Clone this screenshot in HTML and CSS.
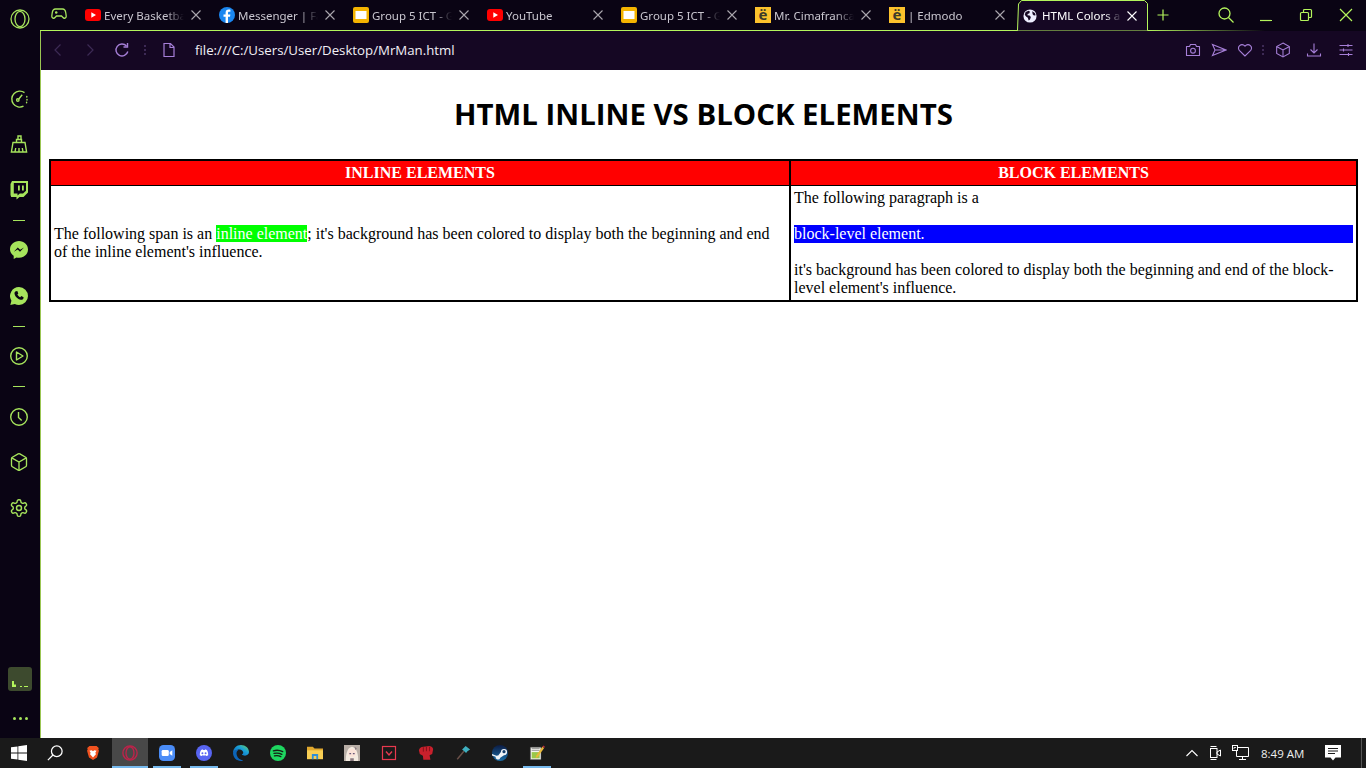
FILE: index.html
```html
<!DOCTYPE html>
<html lang="en">
<head>
<meta charset="utf-8">
<title>MrMan</title>
<link rel="stylesheet" href="styles.css">
</head>
<body>
<div class="screen">
  <div class="desktop">
    <aside class="sidebar">
      <div class="logo-slot">
        <svg class="i20" viewBox="0 0 20 20" fill="none" stroke="currentColor" stroke-width="1.3"><circle cx="10" cy="10" r="9"/><ellipse cx="10" cy="10" rx="5" ry="7.6"/></svg>
      </div>
      <div class="side-slot">
        <svg class="i20" viewBox="0 0 20 20" fill="none" stroke="currentColor" stroke-width="1.4"><path d="M14.5 17.2A8 8 0 1 1 15.5 3.6"/><circle cx="8.8" cy="11" r="1.2"/><path d="M9.8 10l3.4-4.2"/><path d="M17.8 7.5v.6M18 10.4v.6M17.6 13.2v.6" stroke-linecap="round"/></svg>
      </div>
      <div class="side-slot">
        <svg class="i20" viewBox="0 0 20 20" fill="none" stroke="currentColor" stroke-width="1.4"><path d="M4 8.5h12l1.6 9.5H2.4z"/><path d="M7.5 8.5V5.5h5v3M9 5.5V2h3v3.5M6 18l.7-4M10 18v-4M14 18l-.7-4"/></svg>
      </div>
      <div class="side-slot">
        <svg class="i20" viewBox="0 0 20 20"><path fill="currentColor" d="M3 1h16v11.5L14.500 17H10.500L7.500 19.500V17H2.200L1.500 15V4zM4.800 3v10.500H8.500v2l2.300-2H14l3-2.800V3z"/><path fill="currentColor" d="M9 5.500h1.800v5H9zM13 5.500h1.800v5H13z"/></svg>
      </div>
      <div class="side-sep"></div>
      <div class="side-slot">
        <svg class="i20" viewBox="0 0 20 20"><path fill="currentColor" d="M10 1c5 0 9 3.700 9 8.400s-4 8.400-9 8.400c-.9 0-1.700-.1-2.500-.3L4.700 19v-3.200C2.500 14.200 1 12 1 9.400 1 4.700 5 1 10 1z"/><path fill="#0a0414" d="M4.800 11.800l4-4.300 2.300 2.200 3.900-2.200-4 4.300-2.300-2.200z"/></svg>
      </div>
      <div class="side-slot">
        <svg class="i20" viewBox="0 0 20 20"><path fill="currentColor" d="M10 1a9 9 0 0 1 0 18c-1.500 0-3-.4-4.200-1L1.300 19l1.100-4.300A9 9 0 0 1 10 1z"/><path fill="#0a0414" d="M7 5.200l1.300-.1 1 2.300-.9 1.200c.5 1.200 1.500 2.100 2.800 2.700l1.100-1.200 2.300 1.100-.2 1.300c-.4 1-1.500 1.500-2.600 1.300-3.200-.6-5.800-3.200-6.300-6.300C5.300 6.500 6 5.500 7 5.200z"/></svg>
      </div>
      <div class="side-sep"></div>
      <div class="side-slot">
        <svg class="i20" viewBox="0 0 20 20" fill="none" stroke="currentColor" stroke-width="1.4"><circle cx="10" cy="10" r="8.300"/><path d="M7.500 6l6.500 4-6.500 4z" stroke-linejoin="round"/></svg>
      </div>
      <div class="side-sep"></div>
      <div class="side-slot">
        <svg class="i20" viewBox="0 0 20 20" fill="none" stroke="currentColor" stroke-width="1.4"><circle cx="10" cy="10" r="8.300"/><path d="M9.500 5v5.500l3.200 3"/></svg>
      </div>
      <div class="side-slot">
        <svg class="i20" viewBox="0 0 24 24" fill="none" stroke="currentColor" stroke-width="1.600"><path d="M21 8a2 2 0 0 0-1-1.730l-7-4a2 2 0 0 0-2 0l-7 4A2 2 0 0 0 3 8v8a2 2 0 0 0 1 1.730l7 4a2 2 0 0 0 2 0l7-4A2 2 0 0 0 21 16Z"/><path d="m3.300 7 8.700 5 8.700-5M12 22V12"/></svg>
      </div>
      <div class="side-slot">
        <svg class="i20" viewBox="0 0 24 24" fill="none" stroke="currentColor" stroke-width="1.700"><path d="M12.220 2h-.44a2 2 0 0 0-2 2v.18a2 2 0 0 1-1 1.730l-.43.25a2 2 0 0 1-2 0l-.15-.08a2 2 0 0 0-2.730.73l-.22.38a2 2 0 0 0 .73 2.730l.15.1a2 2 0 0 1 1 1.720v.51a2 2 0 0 1-1 1.740l-.15.09a2 2 0 0 0-.73 2.730l.22.38a2 2 0 0 0 2.730.73l.15-.08a2 2 0 0 1 2 0l.43.25a2 2 0 0 1 1 1.730V20a2 2 0 0 0 2 2h.44a2 2 0 0 0 2-2v-.18a2 2 0 0 1 1-1.730l.43-.25a2 2 0 0 1 2 0l.15.08a2 2 0 0 0 2.730-.73l.22-.39a2 2 0 0 0-.73-2.730l-.15-.08a2 2 0 0 1-1-1.740v-.5a2 2 0 0 1 1-1.740l.15-.09a2 2 0 0 0 .73-2.730l-.22-.38a2 2 0 0 0-2.730-.73l-.15.08a2 2 0 0 1-2 0l-.43-.25a2 2 0 0 1-1-1.730V4a2 2 0 0 0-2-2z"/><circle cx="12" cy="12" r="3"/></svg>
      </div>
      <div class="side-bottom">
        <div class="widget">
          <svg viewBox="0 0 24 24" class="widget-svg"><path fill="currentColor" d="M4 14h2v3.500h2V20H4zM12 19h2v1h-2zM16 19h4v1h-4z"/></svg>
        </div>
        <div class="dots"><i></i><i></i><i></i></div>
      </div>
    </aside>

    <div class="browser">
      <div class="tabstrip">
        <div class="game-slot">
          <svg class="i16" viewBox="0 0 16 16" fill="none" stroke="currentColor" stroke-width="1.300"><path d="M4.500 3h7c2 0 3 1.500 3.300 4l.4 3c.2 2-2 3-3.200 1.500L10.500 10h-5L4 11.500C2.800 13 .6 12 .8 10l.4-3C1.500 4.500 2.500 3 4.500 3z"/><path d="M4 6.500h2.500M5.200 5.300v2.400M10.500 6.500h.1M12 6.500h.1"/></svg>
        </div>

        <div class="tab">
          <svg class="fav" viewBox="0 0 16 16"><rect y="2" width="16" height="12" rx="3" fill="#f00"/><path d="M6.300 5.200v5.600L11 8z" fill="#fff"/></svg>
          <span class="tab-title">Every Basketball Play</span>
          <svg class="x" viewBox="0 0 10 10"><path d="M.5.500l9 9M9.500.500l-9 9"/></svg>
        </div>
        <div class="tab">
          <svg class="fav" viewBox="0 0 16 16"><circle cx="8" cy="8" r="8" fill="#1b87f0"/><path d="M9 16V9.800h2l.35-2.400H9V6c0-.8.300-1.200 1.200-1.200h1.200V2.700C11 2.600 10.400 2.500 9.700 2.500 7.800 2.500 6.600 3.600 6.600 5.700v1.700H4.500v2.400h2.100V16z" fill="#fff"/></svg>
          <span class="tab-title">Messenger | Facebook</span>
          <svg class="x" viewBox="0 0 10 10"><path d="M.5.500l9 9M9.500.500l-9 9"/></svg>
        </div>
        <div class="tab">
          <svg class="fav" viewBox="0 0 16 16"><rect width="16" height="16" rx="2" fill="#f4b400"/><rect x="2.500" y="4" width="11" height="8" fill="#fff"/></svg>
          <span class="tab-title">Group 5 ICT - Google Slides</span>
          <svg class="x" viewBox="0 0 10 10"><path d="M.5.500l9 9M9.500.500l-9 9"/></svg>
        </div>
        <div class="tab">
          <svg class="fav" viewBox="0 0 16 16"><rect y="2" width="16" height="12" rx="3" fill="#f00"/><path d="M6.300 5.200v5.600L11 8z" fill="#fff"/></svg>
          <span class="tab-title">YouTube</span>
          <svg class="x" viewBox="0 0 10 10"><path d="M.5.500l9 9M9.500.500l-9 9"/></svg>
        </div>
        <div class="tab">
          <svg class="fav" viewBox="0 0 16 16"><rect width="16" height="16" rx="2" fill="#f4b400"/><rect x="2.500" y="4" width="11" height="8" fill="#fff"/></svg>
          <span class="tab-title">Group 5 ICT - Google Slides</span>
          <svg class="x" viewBox="0 0 10 10"><path d="M.5.500l9 9M9.500.500l-9 9"/></svg>
        </div>
        <div class="tab">
          <span class="fav edmodo">ë</span>
          <span class="tab-title">Mr. Cimafranca | Edmodo</span>
          <svg class="x" viewBox="0 0 10 10"><path d="M.5.500l9 9M9.500.500l-9 9"/></svg>
        </div>
        <div class="tab">
          <span class="fav edmodo">ë</span>
          <span class="tab-title">| Edmodo</span>
          <svg class="x" viewBox="0 0 10 10"><path d="M.5.500l9 9M9.500.500l-9 9"/></svg>
        </div>
        <div class="tab tab-active">
          <svg class="tab-shape" viewBox="0 0 134 31"><path d="M0 30.500H3.500L4.500 4 7.500 .5H130.500L133.500 3.500V30.500" fill="#150723" stroke="#b4f55c"/></svg>
          <svg class="fav fav-globe" viewBox="0 0 16 16"><circle cx="8" cy="8" r="7.500" fill="#eef"/><path d="M3 3.500l3.500-1.500 1.500 1-1 2-1.500.5-.5 1.500 2.500.5 1.500 1.500-1 3-1.500 1-1-3-2-1.500-1.500-2zM10.500 2.500l3 2 1 2.500-2 .5-1.500-1.500z" fill="#150723"/></svg>
          <span class="tab-title">HTML Colors and Color</span>
          <svg class="x" viewBox="0 0 10 10"><path d="M.5.500l9 9M9.500.500l-9 9"/></svg>
        </div>
        <div class="plus-slot">
          <svg class="i12" viewBox="0 0 12 12" fill="none" stroke="currentColor" stroke-width="1.200"><path d="M6 .5v11M.5 6h11"/></svg>
        </div>
        <div class="winctl">
          <div class="ctl"><svg class="i16" viewBox="0 0 16 16" fill="none" stroke="currentColor" stroke-width="1.300"><circle cx="6.500" cy="6.500" r="5.500"/><path d="M10.500 10.500l5 5"/></svg></div>
          <div class="ctl"><svg class="i16" viewBox="0 0 16 16" fill="none" stroke="currentColor" stroke-width="1.200"><path d="M2 13.500h12"/></svg></div>
          <div class="ctl"><svg class="i16" viewBox="0 0 16 16" fill="none" stroke="currentColor" stroke-width="1.200"><rect x="2.500" y="5.500" width="8" height="8" rx="1"/><path d="M5.500 5.500V3.500a1 1 0 0 1 1-1h6a1 1 0 0 1 1 1v6a1 1 0 0 1-1 1h-2"/></svg></div>
          <div class="ctl"><svg class="i16" viewBox="0 0 16 16" fill="none" stroke="currentColor" stroke-width="1.200"><path d="M2 2l12 12M14 2L2 14"/></svg></div>
        </div>
      </div>

      <div class="content">
        <div class="addrbar">
          <div class="nav nav-dim"><svg class="i16" viewBox="0 0 16 16" fill="none" stroke="currentColor" stroke-width="1.200"><path d="M10.500 2.500L5 8l5.500 5.500"/></svg></div>
          <div class="nav nav-dim"><svg class="i16" viewBox="0 0 16 16" fill="none" stroke="currentColor" stroke-width="1.200"><path d="M5.500 2.500L11 8l-5.500 5.500"/></svg></div>
          <div class="nav"><svg class="i16" viewBox="0 0 16 16" fill="none" stroke="currentColor" stroke-width="1.400"><path d="M13.800 9.500A6 6 0 1 1 12.500 4"/><path d="M13.500 1v4h-4"/></svg></div>
          <div class="vdots vd-left"><i></i><i></i><i></i></div>
          <div class="file-slot"><svg class="i16" viewBox="0 0 16 16" fill="none" stroke="currentColor" stroke-width="1.200"><path d="M3 1.500h6.500L13 5v9.500H3zM9 1.500V5.500h4"/></svg></div>
          <div class="url">file:///C:/Users/User/Desktop/MrMan.html</div>
          <div class="tools">
            <div class="tool"><svg class="i16" viewBox="0 0 16 16" fill="none" stroke="currentColor" stroke-width="1.100"><path d="M1.500 4.500h3l1-2h5l1 2h3v9h-13z" stroke-linejoin="round"/><circle cx="8" cy="8.700" r="2.400"/></svg></div>
            <div class="tool"><svg class="i16" viewBox="0 0 16 16" fill="none" stroke="currentColor" stroke-width="1.100"><path d="M1.500 2.500L15 8 1.500 13.500 4 8zM4 8h11"/></svg></div>
            <div class="tool"><svg class="i16" viewBox="0 0 16 16" fill="none" stroke="currentColor" stroke-width="1.100"><path d="M8 14L2.300 8.300A3.500 3.500 0 0 1 7.200 3.400L8 4.200l.8-.8a3.500 3.500 0 0 1 4.900 4.900z"/></svg></div>
            <div class="vdots vd-right"><i></i><i></i><i></i></div>
            <div class="tool tool-31"><svg class="i16" viewBox="0 0 24 24" fill="none" stroke="currentColor" stroke-width="1.600"><path d="M12 1.500l9.500 5.300v10.400L12 22.500l-9.500-5.300V6.800z"/><path d="M2.800 7L12 12l9.200-5M12 22V12"/></svg></div>
            <div class="tool tool-32"><svg class="i16" viewBox="0 0 16 16" fill="none" stroke="currentColor" stroke-width="1.100"><path d="M8 1.500v9M4.500 7.500L8 11l3.500-3.500M1.500 11.500v2.500h13v-2.500"/></svg></div>
            <div class="tool tool-32"><svg class="i16" viewBox="0 0 16 16" fill="none" stroke="currentColor" stroke-width="1.100"><path d="M1.500 3.500h13M1.500 8h13M1.500 12.500h13M10 2v3M5.500 6.500v3M10.500 11v3"/></svg></div>
          </div>
        </div>

        <main class="page">
          <h1 class="title">HTML INLINE VS BLOCK ELEMENTS</h1>
          <table class="compare">
            <colgroup><col class="col-a"><col></colgroup>
            <thead>
              <tr><th>INLINE ELEMENTS</th><th>BLOCK ELEMENTS</th></tr>
            </thead>
            <tbody>
              <tr>
                <td>The following span is an <span class="mark-inline">inline element</span>; it's background has been colored to display both the beginning and end of the inline element's influence.</td>
                <td>The following paragraph is a
                  <p class="mark-block">block-level element.</p>
                  <p class="after">it's background has been colored to display both the beginning and end of the block-level element's influence.</p>
                </td>
              </tr>
            </tbody>
          </table>
        </main>
      </div>
    </div>
  </div>

  <footer class="taskbar">
    <div class="tb"><svg viewBox="0 0 16 16" fill="#fff"><path d="M0 2.300l6.500-.9v6.200H0zM7.300 1.300L16 0v7.600H7.300zM0 8.400h6.500v6.200L0 13.700zM7.300 8.400H16V16l-8.700-1.200z"/></svg></div>
    <div class="tb tb-search"><svg viewBox="0 0 18 18" fill="none" stroke="#fff" stroke-width="1.400"><circle cx="11" cy="7" r="6"/><path d="M6.700 11.300L1 17"/></svg></div>
    <div class="tb"><svg viewBox="0 0 18 18"><path fill="#f1521f" d="M5 1h8l2.500 2.500-.5 1.500.7 1.500L13.500 14 9 17 4.500 14 2.300 6.500 3 5l-.5-1.500z"/><path fill="#fff" d="M5 6.500l2.500-.5L9 7l1.500-1 2.500.5-1.500 2.500 1 1L10 13 9 14l-1-1-2.500-3 1-1z"/></svg></div>
    <div class="tb tb-active"><svg viewBox="0 0 18 18" fill="none" stroke="#c0224a" stroke-width="1.500"><circle cx="9" cy="9" r="8"/><ellipse cx="9" cy="9" rx="4.500" ry="7"/></svg></div>
    <div class="tb tb-open"><svg viewBox="0 0 18 18"><rect width="18" height="18" rx="5" fill="#4a8cf7"/><rect x="3" y="5.500" width="8" height="7" rx="1.500" fill="#fff"/><path d="M12 8l3-2v6l-3-2z" fill="#fff"/></svg></div>
    <div class="tb tb-open"><svg viewBox="0 0 18 18"><circle cx="9" cy="9" r="9" fill="#5865f2"/><path fill="#fff" d="M5.800 5.500c1-.4 1.500-.5 2-.5l.3.6h1.800l.3-.6c.5 0 1 .1 2 .5 1 1.500 1.600 3.500 1.500 6-.8.6-1.500.9-2.300 1l-.6-.9-.9.300H8.100l-.9-.3-.6.9c-.8-.1-1.500-.4-2.300-1-.1-2.500.5-4.500 1.500-6z"/><circle cx="7.200" cy="9.300" r="1.100" fill="#5865f2"/><circle cx="10.800" cy="9.300" r="1.100" fill="#5865f2"/></svg></div>
    <div class="tb"><svg viewBox="0 0 18 18"><defs><linearGradient id="eg" x1="0" y1="1" x2="1" y2="0"><stop offset="0" stop-color="#0a58b0"/><stop offset=".6" stop-color="#1aa0d8"/><stop offset="1" stop-color="#6fd85a"/></linearGradient></defs><path fill="url(#eg)" d="M9 0c5 0 9 3.500 9 8 0 2.500-2 4-4.500 4-1.500 0-3-.5-3.500-1.300.8-.4 1.500-1.200 1.500-2.200C11.500 6.500 9.500 5 7.500 5 3.500 5 0 8 0 9 0 4 4 0 9 0z"/><path fill="#0c64b8" d="M0 9c0-2.500 3-4 6-3.500C4 6.500 3.500 9 4.300 11.500c.8 3 3.700 5.500 7.200 5.800C10.500 17.800 9.800 18 9 18c-5 0-9-4-9-9z"/></svg></div>
    <div class="tb"><svg viewBox="0 0 18 18"><circle cx="9" cy="9" r="9" fill="#1ed760"/><path d="M3.800 6.500c3.500-1 7.300-.7 10.500 1M4.500 9.500c3-.8 6-.5 8.800 1M5 12.300c2.500-.6 5-.4 7.200.8" fill="none" stroke="#152015" stroke-width="1.500" stroke-linecap="round"/></svg></div>
    <div class="tb"><svg viewBox="0 0 18 18"><path fill="#e0a82e" d="M0 2h6.500l2 2H18v11H0z"/><path fill="#f8cf54" d="M0 6h18v10H0z"/><path fill="#2f8fd8" d="M5.500 10h7v6h-2v-3.500h-3V16h-2z"/></svg></div>
    <div class="tb"><svg viewBox="0 0 18 18"><rect width="18" height="18" fill="#b8aea6"/><path fill="#f4ebe0" d="M2 18C2 12 3 3 9 2c6 1 7 10 7 16z"/><circle cx="9" cy="9" r="4.500" fill="#fbe3d8"/><path fill="#6a5a78" d="M6 9h2v1.500H6zM10 9h2v1.500h-2z"/><path fill="#8a7a80" d="M12 2l2.500 2-2 1.500zM7 15h4v3H7z"/></svg></div>
    <div class="tb"><svg viewBox="0 0 16 16" fill="none" stroke="#e8394e" stroke-width="1.200"><rect x="1.500" y="1.500" width="13" height="13"/><path d="M5 6.500l3 3.500 3-3.500" stroke-width="1.400"/></svg></div>
    <div class="tb"><svg viewBox="0 0 18 18"><path fill="#c8202c" d="M1 6Q2 2 6 2L13 1Q17 2 17 5L16 10 13 11.500 13.500 14 14 16.500 6 16.500 5.500 12 2 10z"/><path stroke="#7c1018" fill="none" d="M6 2.500v5M9.500 2v5M13 2v5"/></svg></div>
    <div class="tb"><svg viewBox="0 0 18 18"><path fill="#3fb0c0" d="M8 5l4-4 5 4-3 2-1.500 2z"/><path stroke="#6a5048" stroke-width="1.600" d="M10 7L2.500 16"/></svg></div>
    <div class="tb"><svg viewBox="0 0 18 18"><defs><linearGradient id="sg" x1="0" y1="0" x2="0" y2="1"><stop offset="0" stop-color="#0c1c44"/><stop offset="1" stop-color="#1a6ea8"/></linearGradient></defs><circle cx="9" cy="9" r="9" fill="url(#sg)"/><path fill="#f0f4f8" d="M0 10l5 2.200a3 3 0 0 1 2-.3L10 8a3.500 3.500 0 1 1 3.500 3.500L9.300 14.300A2.700 2.700 0 0 1 4 13.300l-4-1.500z"/><circle cx="13.500" cy="7.500" r="1.800" fill="#16406e"/></svg></div>
    <div class="tb tb-open"><svg viewBox="0 0 18 18"><path fill="#f4f4f0" stroke="#444" stroke-width=".6" d="M1.500 2.500h12v14h-12z"/><rect x="3" y="8" width="9" height="7" fill="#9ac84a"/><path d="M3 4h9M3 6h9" stroke="#777" stroke-width=".8"/><path d="M8 12l7-10 2 1.500-7 10-2.500 1z" fill="#e8b83a"/><path d="M15 2l1-1.500 2 1.500-1 1.500z" fill="#b8303a"/></svg></div>

    <div class="tray">
      <div class="tray-i"><svg class="i12" viewBox="0 0 12 12" fill="none" stroke="#fff" stroke-width="1.100"><path d="M.5 9L6 3.500 11.500 9"/></svg></div>
      <div class="tray-i"><svg class="i16" viewBox="0 0 16 16" fill="none" stroke="#fff" stroke-width="1"><rect x="2.500" y="3.500" width="6.500" height="9"/><path d="M9 7l3.500-2v6L9 9zM2.500 1.500h6M2.500 14.500h6"/></svg></div>
      <div class="tray-i"><svg class="i18" viewBox="0 0 18 18" fill="none" stroke="#fff" stroke-width="1"><path d="M5.500 3.500h12v9h-12zM11.500 12.500v3M8 15.500h7"/><rect x="1.500" y="1.500" width="5" height="5" fill="#1a1a1a"/><path d="M3 5V3.500h2" stroke-width=".8"/></svg></div>
      <div class="clock">8:49 AM</div>
      <div class="notif"><svg class="i18" viewBox="0 0 18 18"><path fill="#fff" d="M1 1h16v12.500h-5.500L9 16.500 6.500 13.500H1z"/><path stroke="#1a1a1a" d="M4 4.500h10M4 7h10M4 9.500h7"/></svg></div>
      <div class="show-desktop"></div>
    </div>
  </footer>
</div>
</body>
</html>
```

FILE: styles.css
```css
* { box-sizing: border-box; }
html, body { margin: 0; padding: 0; height: 100%; overflow: hidden; }
body { font-family: "Noto Sans", sans-serif; background: #fff; }
svg { display: block; flex: none; }

.i12 { width: 12px; height: 12px; }
.i16 { width: 16px; height: 16px; }
.i18 { width: 18px; height: 18px; }
.i20 { width: 20px; height: 20px; }

.screen { width: 1366px; height: 768px; display: flex; flex-direction: column; }
.desktop { flex: 1; display: flex; min-height: 0; }

/* sidebar */
.sidebar { width: 40px; flex: none; background: #0a0414; color: #a6e45c; display: flex; flex-direction: column; align-items: stretch; }
.logo-slot { height: 76px; display: flex; justify-content: center; padding-top: 9px; padding-right: 1px; }
.side-slot { height: 45.5px; display: flex; align-items: center; justify-content: center; padding-right: 2px; }
.side-sep { height: 15px; display: flex; align-items: center; justify-content: center; padding-right: 2px; }
.side-sep::before { content: ""; width: 12px; height: 1px; background: #a6e45c; }
.side-bottom { margin-top: auto; display: flex; flex-direction: column; align-items: center; padding-bottom: 18px; }
.widget { width: 24px; height: 24px; border-radius: 3px; background: #3d4a2e; color: #b4f55c; }
.widget-svg { width: 24px; height: 24px; }
.dots { display: flex; gap: 3px; margin-top: 26px; }
.dots i { width: 3px; height: 3px; border-radius: 50%; background: #a6e45c; }

/* browser */
.browser { flex: 1; min-width: 0; display: flex; flex-direction: column; }
.tabstrip {
  height: 31px; flex: none; display: flex; color: #b4f55c; padding-left: 1px;
  background-color: #0a0414;
  background-image: linear-gradient(to right, #b4f55c 0, #b4f55c 1108px, #0a0414 1225px);
  background-size: 100% 1px; background-position: 0 30px; background-repeat: no-repeat;
}
.game-slot { width: 35px; display: flex; align-items: center; justify-content: center; padding: 0 0 3px 1px; color: #a6e45c; }
.tab { width: 134px; height: 30px; flex: none; display: flex; align-items: center; padding: 0 9px; position: relative; color: #c9c6cf; font-size: 11.5px; }
.fav { width: 16px; height: 16px; flex: none; margin-right: 3px; }
.edmodo { background: #fcc22c; color: #3d3a2a; font: 700 15px/15px "Noto Sans", sans-serif; text-align: center; overflow: hidden; }
.tab-title { width: 80px; flex: none; white-space: nowrap; overflow: hidden; -webkit-mask-image: linear-gradient(to right, #000 62px, transparent 80px); mask-image: linear-gradient(to right, #000 62px, transparent 80px); }
.x { width: 10px; height: 10px; margin-left: 7px; fill: none; stroke: #aaa7ae; stroke-width: 1.100; }
.tab-active { height: 31px; color: #fff; }
.tab-active .x { stroke: #fff; position: relative; }
.tab-shape { position: absolute; left: 0; top: 0; width: 134px; height: 31px; }
.fav-globe { position: relative; margin-right: 5px; width: 14px; height: 14px; }
.tab-active .tab-title { position: relative; width: 78px; }
.plus-slot { width: 30px; display: flex; align-items: center; justify-content: center; padding-bottom: 2px; }
.winctl { margin-left: auto; display: flex; }
.ctl { width: 40px; height: 30px; display: flex; align-items: center; justify-content: center; }

/* address bar */
.content { flex: 1; display: flex; flex-direction: column; min-height: 0; border-left: 1px solid #9bc653; }
.addrbar { height: 39px; flex: none; display: flex; align-items: center; padding-bottom: 1px; background: #150723; color: #a67fd8; }
.nav { width: 32px; height: 100%; display: flex; align-items: center; justify-content: center; }
.nav:first-child { margin-left: 1px; }
.nav-dim { color: #3d2a55; }
.vdots { display: flex; flex-direction: column; align-items: center; gap: 2px; }
.vdots i { width: 2px; height: 2px; background: #3d2a55; }
.vd-left { width: 14px; }
.vd-right { width: 9px; }
.file-slot { width: 34px; display: flex; justify-content: center; }
.url { margin-left: 9px; color: #f2eff6; font-family: "Open Sans", sans-serif; font-size: 13.25px; white-space: nowrap; }
.tools { margin-left: auto; display: flex; align-items: center; padding-right: 4px; }
.tool { width: 26px; display: flex; justify-content: center; }
.tool-31 { width: 31px; }
.tool-32 { width: 32px; }

/* page */
.page { flex: 1; background: #fff; padding: 8px; min-height: 0; overflow: hidden; color: #000; }
.title { margin: 16px 0 24px; text-align: center; font-family: "Open Sans", sans-serif; font-size: 29.4px; line-height: 41px; font-weight: 700; }
.compare { width: 1309px; border: 2px solid #000; border-collapse: collapse; font-family: "Liberation Serif", serif; font-size: 16px; line-height: 18px; table-layout: fixed; }
.col-a { width: 740px; }
.compare th { background: #f00; color: #fff; font-weight: 700; padding: 3px; border: 1px solid #000; border-right-width: 2px; height: 25px; }
.compare td { padding: 3px; border: 1px solid #000; border-right-width: 2px; }
.mark-inline { background: #0f0; color: #fff; }
.mark-block { margin: 18px 0; background: #00f; color: #fff; }
.after { margin: 0; }

/* taskbar */
.taskbar { height: 30px; flex: none; background: #1a1a1a; display: flex; align-items: stretch; }
.tb { width: 37px; position: relative; display: flex; align-items: center; justify-content: center; }
.tb svg { width: 16px; height: 16px; }
.tb-search { padding-right: 2px; }
.tb-active { background: #484848; box-shadow: inset 0 -2px 0 #76b9ed; width: 36px; margin-left: 1px; }
.tb-open::after { content: ""; position: absolute; left: 5px; right: 4px; bottom: 0; height: 2px; background: #76b9ed; }
.tray { margin-left: auto; display: flex; align-items: center; }
.tray-i { width: 24px; display: flex; justify-content: center; }
.clock { width: 43px; margin-left: 9px; color: #eee; font-family: "Open Sans", sans-serif; font-size: 11.5px; white-space: nowrap; }
.notif { width: 18px; margin-left: 20px; }
.show-desktop { width: 1px; height: 100%; margin-left: 19px; margin-right: 4px; background: #555; }
```
